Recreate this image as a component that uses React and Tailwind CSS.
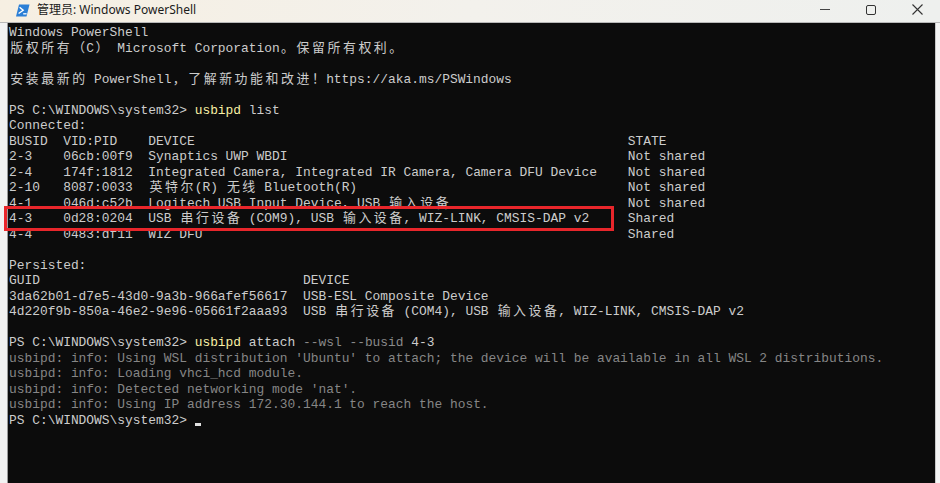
import React from 'react';

const FG = 'text-[#cccccc]';
const CMD = 'text-[#f9f1a5]';
const PARAM = 'text-[#8a8a8a]';
const INFO = 'text-[#868686]';

const isWide = (ch) => /[\u3000-\u9fff\uff00-\uffef]/.test(ch);

// split text so CJK glyphs take two cells, like the console grid
function Cells({ text }) {
  const out = [];
  let buf = '';
  [...text].forEach((ch, i) => {
    if (isWide(ch)) {
      if (buf) out.push(buf);
      buf = '';
      out.push(
        <span key={i} className="inline-block w-[2ch] text-center">
          {ch}
        </span>
      );
    } else {
      buf += ch;
    }
  });
  if (buf) out.push(buf);
  return out;
}

const lines = [
  [['Windows PowerShell', FG]],
  [['版权所有（C） Microsoft Corporation。保留所有权利。', FG]],
  [],
  [['安装最新的 PowerShell，了解新功能和改进！https://aka.ms/PSWindows', FG]],
  [],
  [['PS C:\\WINDOWS\\system32> ', FG], ['usbipd', CMD], [' list', FG]],
  [['Connected:', FG]],
  [['BUSID  VID:PID    DEVICE                                                        STATE', FG]],
  [['2-3    06cb:00f9  Synaptics UWP WBDI                                            Not shared', FG]],
  [['2-4    174f:1812  Integrated Camera, Integrated IR Camera, Camera DFU Device    Not shared', FG]],
  [['2-10   8087:0033  英特尔(R) 无线 Bluetooth(R)                                   Not shared', FG]],
  [['4-1    046d:c52b  Logitech USB Input Device, USB 输入设备                       Not shared', FG]],
  [['4-3    0d28:0204  USB 串行设备 (COM9), USB 输入设备, WIZ-LINK, CMSIS-DAP v2     Shared', FG]],
  [['4-4    0483:df11  WIZ DFU                                                       Shared', FG]],
  [],
  [['Persisted:', FG]],
  [['GUID                                  DEVICE', FG]],
  [['3da62b01-d7e5-43d0-9a3b-966afef56617  USB-ESL Composite Device', FG]],
  [['4d220f9b-850a-46e2-9e96-05661f2aaa93  USB 串行设备 (COM4), USB 输入设备, WIZ-LINK, CMSIS-DAP v2', FG]],
  [],
  [['PS C:\\WINDOWS\\system32> ', FG], ['usbipd', CMD], [' attach ', FG], ['--wsl', PARAM], [' ', FG], ['--busid', PARAM], [' 4-3', FG]],
  [["usbipd: info: Using WSL distribution 'Ubuntu' to attach; the device will be available in all WSL 2 distributions.", INFO]],
  [['usbipd: info: Loading vhci_hcd module.', INFO]],
  [["usbipd: info: Detected networking mode 'nat'.", INFO]],
  [['usbipd: info: Using IP address 172.30.144.1 to reach the host.', INFO]],
  [['PS C:\\WINDOWS\\system32> ', FG], ['cursor', 'cursor']],
];

function PsIcon() {
  return (
    <svg width="14" height="13" viewBox="0 0 14 13">
      <path d="M3 0.5h10.5l-3 12h-10.5z" fill="#2b7fd6" />
      <path d="M3.6 3.2l3.6 3.1-4.6 3.2" stroke="#fff" strokeWidth="1.4" fill="none" />
      <path d="M7.2 9.8h3.4" stroke="#fff" strokeWidth="1.3" />
    </svg>
  );
}

export default function App() {
  return (
    <div className="relative w-[940px] h-[483px] overflow-hidden bg-[#f4f4f2] flex flex-col">
      {/* Title bar */}
      <div className="h-[23px] flex items-center bg-gradient-to-r from-[#f6efe2] via-[#f3f1ec] to-[#eef0ee] border-b border-[#b8b8b8]">
        <div className="ml-[16px] mt-[-2px]">
          <PsIcon />
        </div>
        <span
          className="ml-[7px] mt-[-2px] text-[12px] text-[#1b1b1b]"
          style={{ fontFamily: '"Noto Sans", "Noto Sans CJK SC", sans-serif' }}
        >
          管理员: Windows PowerShell
        </span>
        <div className="ml-auto flex items-center h-full mt-[-3px]">
          <div className="w-[46px] flex justify-center">
            <div className="w-[10px] h-px bg-[#444]" />
          </div>
          <div className="w-[46px] flex justify-center">
            <div className="w-[10px] h-[10px] border border-[#333] rounded-[2px]" />
          </div>
          <div className="w-[46px] flex justify-center">
            <svg width="11" height="11" viewBox="0 0 11 11">
              <path d="M0.5 0.5l10 10M10.5 0.5l-10 10" stroke="#333" strokeWidth="1.1" />
            </svg>
          </div>
        </div>
      </div>

      {/* Console body */}
      <div className="flex-1 flex">
        <div className="w-[8px] bg-[#f2f2f2] border-r border-[#9a9a9a]" />
        <div
          className="flex-1 bg-[#0c0c0c] pl-[1px] pt-[2px] text-[12.9px] leading-[15.52px] whitespace-pre overflow-hidden"
          style={{ fontFamily: '"Liberation Mono", "Noto Sans CJK SC", monospace' }}
        >
          {lines.map((segs, i) => (
            <div key={i} className="h-[15.52px]">
              {segs.map(([t, c], j) =>
                c === 'cursor' ? (
                  <span key={j} className="inline-block w-[6px] h-[3px] bg-[#e0e0e0] align-[-2px]" />
                ) : (
                  <span key={j} className={c}>
                    <Cells text={t} />
                  </span>
                )
              )}
            </div>
          ))}
        </div>
        <div className="w-[5px] bg-[#f4f4f4] border-l border-[#c8c8c8]" />
      </div>

      {/* annotation box */}
      <div className="absolute left-[4px] top-[206px] w-[610px] h-[25px] border-[3px] border-[#e8262b]" />
    </div>
  );
}
